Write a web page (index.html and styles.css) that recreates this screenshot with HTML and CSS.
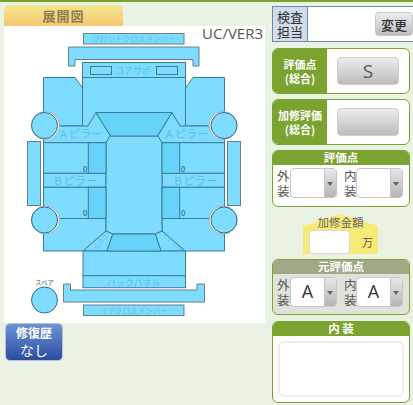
FILE: index.html
```html
<!DOCTYPE html>
<html lang="ja">
<head>
<meta charset="utf-8">
<title>展開図</title>
<link rel="stylesheet" href="styles.css">
</head>
<body>
<div class="page">
  <div class="left">
    <div class="tab">展開図</div>
    <div class="panel">
      <span class="ver">UC/VER3</span>
      <svg class="car" viewBox="4 26 261 297" width="261" height="297" xmlns="http://www.w3.org/2000/svg">
        <g class="outer">
          <rect x="83.5" y="33.5" width="100.5" height="10.5"/>
          <path d="M68.5 47H199V66H193V59.5H75V66H68.5Z"/>
          <rect x="27.5" y="141.5" width="13" height="64"/>
          <rect x="227.5" y="141.5" width="13" height="64"/>
          <path d="M63.5 284H70.5V290H197V284H204.5V302H63.5Z"/>
          <rect x="83.5" y="305" width="100.5" height="10.5"/>
        </g>
        <g class="part">
          <path d="M43.5 77.5H75L82.5 88V126H43.5Z"/>
          <path d="M224.5 77.5H193L185.5 88V126H224.5Z"/>
          <rect x="82.5" y="62.5" width="103" height="15"/>
          <rect x="82.5" y="77.5" width="103" height="49"/>
          <rect x="90.5" y="66.5" width="21" height="8"/>
          <rect x="156.5" y="66.5" width="21" height="8"/>
          <path d="M43.5 126H88L96 112.5L110.5 136L106 142.7H43.5Z"/>
          <path d="M224.5 126H180L172 112.5L157.5 136L162 142.7H224.5Z"/>
          <rect x="43.5" y="142.7" width="62.5" height="30.6"/>
          <rect x="162" y="142.7" width="62.5" height="30.6"/>
          <rect x="43.5" y="173.3" width="62.5" height="14"/>
          <rect x="162" y="173.3" width="62.5" height="14"/>
          <rect x="43.5" y="187.3" width="62.5" height="31.2"/>
          <rect x="162" y="187.3" width="62.5" height="31.2"/>
          <path d="M43.5 218.5H106V231L83 251H43.5Z"/>
          <path d="M224.5 218.5H162V231L185 251H224.5Z"/>
          <path d="M106 231L112.7 234L107 251H83Z"/>
          <path d="M162 231L155.3 234L161 251H185Z"/>
          <path d="M110 136H158L162 142.7V230.7L155.3 234H112.7L106 230.7V142.7Z"/>
          <rect x="83" y="251" width="102.5" height="24.7"/>
          <rect x="83" y="275.7" width="102.5" height="12"/>
        </g>
        <g class="glass">
          <path d="M96 112.5H172L157.5 136H110.5Z"/>
          <rect x="88.3" y="142.7" width="17.7" height="30.6"/>
          <rect x="162" y="142.7" width="17.7" height="30.6"/>
          <rect x="88.3" y="187.3" width="17.7" height="31.2"/>
          <rect x="162" y="187.3" width="17.7" height="31.2"/>
          <path d="M112.7 234H155.3L161 251H107Z"/>
        </g>
        <g class="ring">
          <circle cx="45.5" cy="125.5" r="14"/>
          <circle cx="223" cy="125.5" r="14"/>
          <circle cx="45.5" cy="220" r="14"/>
          <circle cx="223" cy="220" r="14"/>
        </g>
        <g class="wheel">
          <circle cx="44.5" cy="125.5" r="13"/>
          <circle cx="224" cy="125.5" r="13"/>
          <circle cx="44.5" cy="220" r="13"/>
          <circle cx="224" cy="220" r="13"/>
          <circle cx="44.5" cy="300" r="13"/>
        </g>
        <g class="label">
          <text x="134" y="41.5" class="t8">フロントクロスメンバー</text>
          <text x="133" y="74" class="t9">コアサポ</text>
          <text x="81" y="138" class="t11">A ピラー</text>
          <text x="187" y="138" class="t11">A ピラー</text>
          <text x="75.5" y="185" class="t11">B ピラー</text>
          <text x="195.5" y="185" class="t11">B ピラー</text>
          <text x="134" y="285.5" class="t9">バックパネル</text>
          <text x="134" y="314" class="t8">リアクロスメンバー</text>
          <text x="97" y="243" class="t6" transform="rotate(130 97 243)">C ピラー</text>
          <text x="171" y="243" class="t6" transform="rotate(48 171 243)">C ピラー</text>
        </g>
        <g class="zero">
          <text x="85" y="172">0</text>
          <text x="183" y="172">0</text>
          <text x="85" y="216">0</text>
          <text x="183" y="216">0</text>
        </g>
        <text x="44.5" y="285" class="spare">スペア</text>
      </svg>
    </div>
    <div class="history"><b>修復歴</b><span>なし</span></div>
  </div>

  <div class="right">
    <div class="inspector">
      <div class="inspector-head">検査<br>担当</div>
      <div class="inspector-body"><button class="change">変更</button></div>
    </div>

    <div class="score">
      <div class="score-label">評価点<br>(総合)</div>
      <div class="score-body"><div class="score-btn">S</div></div>
    </div>
    <div class="score">
      <div class="score-label">加修評価<br>(総合)</div>
      <div class="score-body"><div class="score-btn"></div></div>
    </div>

    <div class="box box-rate">
      <div class="box-head">評価点</div>
      <div class="selects">
        <span class="sel-label">外<br>装</span>
        <div class="sel"><span class="sel-val"></span><span class="sel-arrow"></span></div>
        <span class="sel-label">内<br>装</span>
        <div class="sel"><span class="sel-val"></span><span class="sel-arrow"></span></div>
      </div>
    </div>

    <div class="amount">
      <div class="amount-title">加修金額</div>
      <div class="amount-row"><div class="amount-input"></div><span class="amount-unit">万</span></div>
    </div>

    <div class="box box-orig">
      <div class="box-head box-head-gray">元評価点</div>
      <div class="selects">
        <span class="sel-label">外<br>装</span>
        <div class="sel"><span class="sel-val">A</span><span class="sel-arrow"></span></div>
        <span class="sel-label">内<br>装</span>
        <div class="sel"><span class="sel-val">A</span><span class="sel-arrow"></span></div>
      </div>
    </div>

    <div class="box box-interior">
      <div class="box-head">内 装</div>
      <div class="textarea"></div>
    </div>
  </div>
</div>
</body>
</html>
```
FILE: styles.css
```css
* { box-sizing: border-box; }
html, body { margin: 0; padding: 0; }
body {
  width: 413px;
  height: 405px;
  overflow: hidden;
  background: #eaf2e3;
  font-family: "Noto Sans CJK JP", "Noto Sans", sans-serif;
  color: #444;
}
.page {
  display: flex;
  height: 405px;
  border-top: 2px solid #7ba32f;
}
.left {
  width: 261px;
  margin-left: 4px;
  padding-top: 3px;
  flex: none;
}
.tab {
  width: 119px;
  height: 21px;
  border-radius: 6px 6px 0 0;
  background: linear-gradient(#f3e690, #f8c66f);
  color: #8a7f50;
  font-size: 13px;
  font-weight: 700;
  line-height: 21px;
  text-align: center;
  letter-spacing: 1px;
}
.panel {
  position: relative;
  width: 261px;
  height: 297px;
  background: #fff;
}
.car { display: block; }
.ver {
  position: absolute;
  right: 2px;
  top: -2px;
  font-family: "Open Sans", sans-serif;
  font-size: 15px;
  line-height: 18px;
  color: #555;
}
.outer rect, .outer path {
  fill: #7ddcff;
  stroke: #6a7f88;
  stroke-width: 1;
}
.part rect, .part path {
  fill: #7ddcff;
  stroke: #3b7d96;
  stroke-width: 1;
}
.glass rect, .glass path {
  fill: #66d3f8;
  stroke: #3b7d96;
  stroke-width: 1;
}
.ring circle {
  fill: #fff;
  stroke: #aaa;
  stroke-width: 1;
}
.wheel circle {
  fill: #7ddcff;
  stroke: #2f6f88;
  stroke-width: 1;
}
.label text {
  fill: #5cc0e6;
  text-anchor: middle;
}
.t6 { font-size: 6px; }
.t8 { font-size: 7.6px; }
.t9 { font-size: 9px; }
.t11 { font-size: 11px; }
.zero text {
  fill: #3b8aa8;
  font-size: 8px;
  font-weight: 700;
  text-anchor: middle;
}
.spare {
  fill: #666;
  font-size: 6.5px;
  text-anchor: middle;
}
.history {
  width: 58px;
  height: 38px;
  margin: 0 0 0 1px;
  border-radius: 5px;
  background: linear-gradient(#6d93d6, #2a4d9f);
  border: 1px solid #b7c4cf;
  color: #fff;
  text-align: center;
  display: flex;
  flex-direction: column;
  justify-content: center;
}
.history b { font-size: 12px; line-height: 16px; }
.history span { font-size: 14px; line-height: 18px; }
.right {
  width: 141px;
  margin-left: 7px;
  padding-top: 4px;
  flex: none;
}
.inspector {
  display: flex;
  height: 36px;
  background: #fff;
  border-top: 1px solid #6a8cb0;
  border-bottom: 1px solid #6a8cb0;
}
.inspector-head {
  width: 36px;
  background: #d4dcec;
  border-left: 1px solid #6a8cb0;
  border-right: 1px solid #6a8cb0;
  font-size: 13px;
  line-height: 15px;
  padding-top: 2px;
  text-align: center;
  color: #333;
}
.inspector-body {
  flex: 1;
  display: flex;
  justify-content: flex-end;
  align-items: center;
}
.change {
  width: 38px;
  height: 24px;
  padding: 0;
  border: 1px solid #c8c8c8;
  border-radius: 4px;
  background: linear-gradient(#eeeeee, #bdbdbd);
  font-family: inherit;
  font-size: 13px;
  font-weight: 500;
  color: #333;
}
.score {
  display: flex;
  width: 138px;
  height: 46px;
  margin-top: 6px;
  border: 1px solid #7ba32f;
  border-radius: 6px;
  background: #fff;
  overflow: hidden;
}
.score + .score { margin-top: 5px; }
.score-label {
  width: 54px;
  background: #7ba32f;
  color: #fff;
  font-size: 11px;
  font-weight: 700;
  line-height: 14px;
  text-align: center;
  display: flex;
  align-items: center;
  justify-content: center;
  white-space: nowrap;
}
.score-body {
  flex: 1;
  display: flex;
  align-items: center;
  justify-content: center;
}
.score-btn {
  width: 62px;
  height: 28px;
  border: 1px solid #cfcfcf;
  border-radius: 4px;
  background: linear-gradient(#ececec, #bcbcbc);
  font-family: "Open Sans", sans-serif;
  font-size: 19px;
  line-height: 26px;
  text-align: center;
  color: #555;
}
.box {
  width: 138px;
  border: 1px solid #7ba32f;
  border-radius: 6px;
  overflow: hidden;
  background: #fff;
}
.box-head {
  height: 15px;
  margin: -1px -1px 0;
  background: #7ba32f;
  color: #fff;
  font-size: 11.5px;
  font-weight: 700;
  line-height: 15px;
  text-align: center;
}
.box-head-gray { background: #9fa987; }
.box-rate { height: 57px; margin-top: 5px; }
.box-orig { height: 56px; background: #e0e3da; }
.box-interior { height: 82px; margin-top: 6px; }
.selects {
  display: flex;
  padding: 3px 0 0 4px;
}
.sel-label {
  width: 13px;
  font-size: 12.5px;
  line-height: 15px;
  flex: none;
  color: #555;
}
.sel + .sel-label {
  width: 12px;
  margin-left: 7px;
}
.sel {
  display: flex;
  width: 47px;
  height: 30px;
  border: 1px solid #c6c6c6;
  border-radius: 4px;
  background: #fff;
  overflow: hidden;
  flex: none;
}
.sel-val {
  flex: 1;
  font-family: "Open Sans", sans-serif;
  font-size: 18px;
  line-height: 26px;
  text-align: center;
  color: #333;
}
.sel-arrow {
  position: relative;
  width: 12px;
  background: linear-gradient(#e8e8e8, #b4b4b4);
  border-left: 1px solid #c6c6c6;
}
.sel-arrow::after {
  content: "";
  position: absolute;
  left: 2px;
  top: 13px;
  border-left: 3px solid transparent;
  border-right: 3px solid transparent;
  border-top: 4px solid #666;
}
.amount {
  position: relative;
  width: 75px;
  height: 40px;
  margin: 7px 0 5px 31px;
}
.amount::before {
  content: "";
  position: absolute;
  inset: 0;
  background: #f8ea76;
  clip-path: polygon(50% 0, 100% 30%, 100% 100%, 0 100%, 0 30%);
}
.amount-title {
  position: relative;
  font-size: 11.5px;
  line-height: 15px;
  padding-top: 1px;
  text-align: center;
  color: #666;
  white-space: nowrap;
}
.amount-row {
  position: relative;
  display: flex;
  align-items: center;
  padding-left: 6px;
}
.amount-input {
  width: 41px;
  height: 24px;
  background: #fff;
  border: 1px solid #d8d8d8;
  border-radius: 4px;
}
.amount-unit {
  margin-left: 12px;
  font-size: 11px;
  line-height: 14px;
  color: #555;
}
.textarea {
  height: 56px;
  margin: 5px 5px 0;
  border: 2px solid #eeeeee;
  border-radius: 6px;
}
```
